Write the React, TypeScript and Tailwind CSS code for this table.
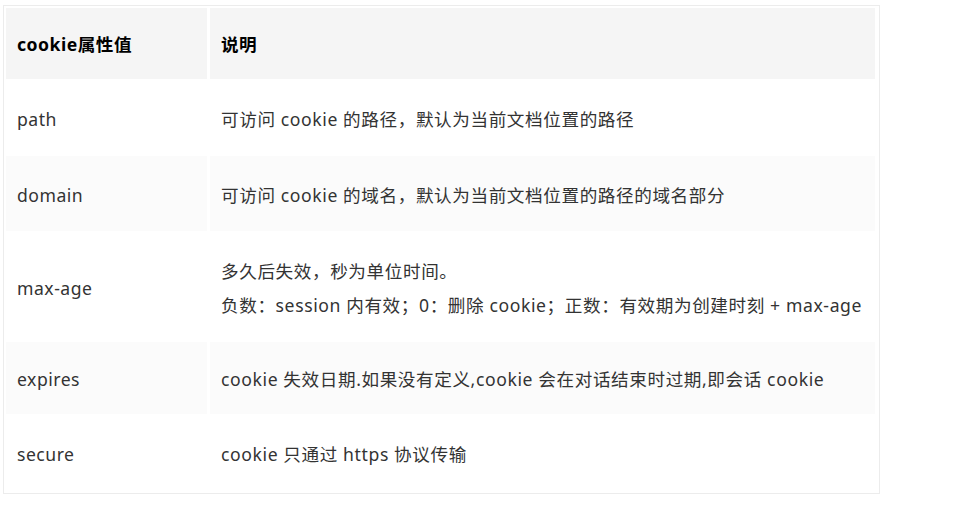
import React from "react";

const rows: { k: string; v: React.ReactNode; h: string; alt: boolean }[] = [
  { k: "path", v: "可访问 cookie 的路径，默认为当前文档位置的路径", h: "h-[77px]", alt: false },
  { k: "domain", v: "可访问 cookie 的域名，默认为当前文档位置的路径的域名部分", h: "h-[75px]", alt: true },
  {
    k: "max-age",
    v: (
      <div className="flex flex-col">
        <span className="leading-[34px]">多久后失效，秒为单位时间。</span>
        <span className="leading-[34px]">负数：session 内有效；0：删除 cookie；正数：有效期为创建时刻 + max-age</span>
      </div>
    ),
    h: "h-[111px]",
    alt: false,
  },
  { k: "expires", v: "cookie 失效日期.如果没有定义,cookie 会在对话结束时过期,即会话 cookie", h: "h-[72px]", alt: true },
  { k: "secure", v: "cookie 只通过 https 协议传输", h: "h-[77px]", alt: false },
];

export default function App() {
  return (
    <div
      className="w-[969px] h-[521px] bg-white pt-[5px] pl-[3px]"
      style={{ fontFamily: '"Noto Sans", "Noto Sans CJK SC", sans-serif' }}
    >
      <div className="w-[877px] border border-[#ececec] p-[2px]">
        <div className="grid grid-cols-[201px_665px] gap-x-[3px] text-[17.6px] text-[#333]">
          <div className="h-[71px] bg-[#f5f5f5] flex items-center pl-[11px] pt-[2px] font-bold text-black tracking-[0.5px]">cookie属性值</div>
          <div className="h-[71px] bg-[#f5f5f5] flex items-center pl-[11px] pt-[2px] font-bold text-black tracking-[0.5px]">说明</div>
          {rows.map((r) => (
            <React.Fragment key={r.k}>
              <div className={`${r.h} ${r.alt ? "bg-[#fbfbfb]" : "bg-white"} flex items-center pl-[11px] pt-[3px] tracking-[0.5px]`}>{r.k}</div>
              <div className={`${r.h} ${r.alt ? "bg-[#fbfbfb]" : "bg-white"} flex items-center pl-[11px] pt-[3px] whitespace-nowrap tracking-[0.6px]`}>
                {r.v}
              </div>
            </React.Fragment>
          ))}
        </div>
      </div>
    </div>
  );
}
